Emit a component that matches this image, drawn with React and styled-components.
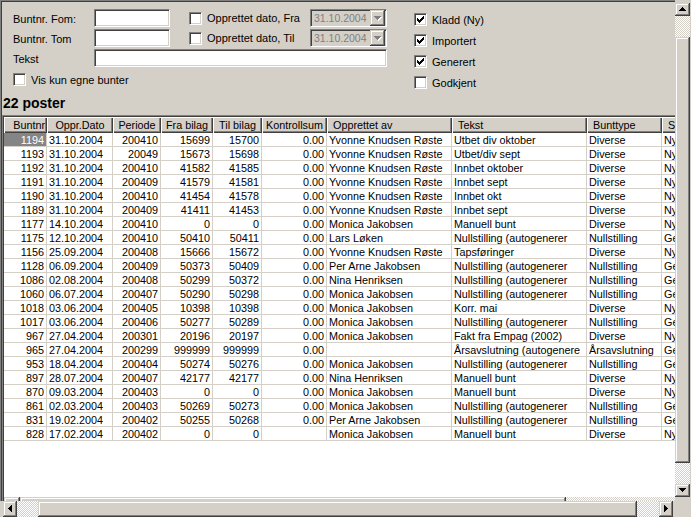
import React from 'react';
import styled, { createGlobalStyle } from 'styled-components';

const face = '#d4d0c8';
const shadow = '#808080';
const dark = '#404040';
const gridLine = '#d4d0c8';

const raised = `inset -1px -1px ${dark}, inset 1px 1px ${face}, inset -2px -2px ${shadow}, inset 2px 2px #ffffff`;
const checker = `repeating-conic-gradient(${face} 0 25%, #ffffff 0 50%) 0 0 / 2px 2px`;

const GlobalStyle = createGlobalStyle`
  html, body { margin: 0; padding: 0; background: ${face}; }
  body {
    font-family: 'Liberation Sans', Arial, sans-serif;
    font-size: 11px;
    color: #000;
  }
  * { box-sizing: border-box; }
`;

const Window = styled.div`
  width: 691px;
  height: 517px;
  overflow: hidden;
  display: grid;
  grid-template-columns: 675px 16px;
  grid-template-rows: 501px 16px;
  background: ${face};
`;

const Viewport = styled.div`
  overflow: hidden;
  border-top: 1px solid ${shadow};
  border-left: 1px solid ${shadow};
  box-shadow: inset 1px 1px ${dark};
  padding: 1px 0 0 1px;
`;

/* ---------- filter panel ---------- */

const FilterPanel = styled.div`
  display: flex;
  align-items: flex-start;
  padding: 7px 0 0 11px;
`;

const FormGrid = styled.div`
  display: grid;
  grid-template-columns: 81px 76px 19px 121px 77px;
  grid-template-rows: 18px 18px 18px 18px;
  row-gap: 2px;
  align-items: center;
`;

const Label = styled.div`
  padding-top: 2px;
  white-space: nowrap;
`;

const Sunken = styled.div`
  height: 18px;
  background: ${p => (p.$disabled ? face : '#ffffff')};
  border: 1px solid;
  border-color: ${shadow} #ffffff #ffffff ${shadow};
  box-shadow: inset 1px 1px ${dark}, inset -1px -1px ${face};
  grid-column: ${p => p.$span || 'auto'};
`;

const Combo = styled(Sunken)`
  display: flex;
  align-items: center;
  justify-content: space-between;
  padding: 0 1px 0 3px;
  color: ${shadow};
  font-size: 10.5px;
`;

const ComboButton = styled.div`
  width: 15px;
  height: 16px;
  flex: none;
  background: ${face};
  box-shadow: ${raised};
  display: flex;
  align-items: center;
  justify-content: center;
`;

const CheckItem = styled.label`
  display: flex;
  align-items: center;
  gap: 5px;
  white-space: nowrap;
  grid-column: ${p => p.$span || 'auto'};
  margin-top: ${p => p.$offset || 0}px;
  align-self: ${p => (p.$offset ? 'start' : 'auto')};
`;

const Box = styled.span`
  width: 13px;
  height: 13px;
  flex: none;
  background: #ffffff;
  border: 1px solid;
  border-color: ${shadow} #ffffff #ffffff ${shadow};
  box-shadow: inset 1px 1px ${dark}, inset -1px -1px ${face};
  display: flex;
  align-items: center;
  justify-content: center;
`;

const StatusChecks = styled.div`
  margin: 4px 0 0 27px;
  display: flex;
  flex-direction: column;
  align-items: flex-start;
  gap: 8px;
`;

const CountLabel = styled.div`
  margin: 6px 0 0 1px;
  font-size: 14px;
  font-weight: bold;
  line-height: 16px;
`;

/* ---------- data grid ---------- */

const GridBox = styled.div`
  margin-top: 4px;
  width: 760px;
  height: 398px;
  display: flex;
  flex-direction: column;
  border-top: 1px solid ${shadow};
  border-left: 1px solid ${shadow};
  box-shadow: inset 1px 1px ${dark};
  padding: 1px 0 0 1px;
`;

const GridBody = styled.div`
  flex: 1;
  overflow: hidden;
  background: #ffffff;
  font-size: 10.8px;
`;

const colTemplate = '43px 66px 48px 52px 49px 65px 125px 135px 75px 60px';

const Row = styled.div`
  display: grid;
  grid-template-columns: ${colTemplate};
  height: ${p => (p.$head ? 16 : 14)}px;
`;

const HeadCell = styled.div`
  background: ${face};
  box-shadow: inset 1px 1px #ffffff, inset -1px -1px ${dark}, inset -2px -2px ${shadow};
  line-height: 16px;
  padding: 0 ${p => (p.$align === 'left' ? '6px' : '2px')};
  text-align: ${p => p.$align};
  white-space: nowrap;
  overflow: hidden;
`;

const Cell = styled.div`
  border-right: 1px solid ${gridLine};
  border-bottom: 1px solid ${gridLine};
  padding: 1px 2px 0;
  line-height: 13px;
  text-align: ${p => (p.$right ? 'right' : 'left')};
  white-space: nowrap;
  overflow: hidden;
  background: ${p => (p.$selected ? '#858585' : '#ffffff')};
  color: ${p => (p.$selected ? '#ffffff' : '#000000')};
`;

/* ---------- scrollbars ---------- */

const HBar = styled.div`
  display: flex;
  height: 16px;
  margin-left: ${p => p.$inset || 0}px;
  margin-right: ${p => p.$end || 0}px;
  flex: none;
`;

const VBar = styled.div`
  display: flex;
  flex-direction: column;
  width: 15px;
  height: 494px;
  margin-top: 3px;
`;

const ArrowButton = styled.div`
  flex: 0 0 ${p => p.$size}px;
  background: ${face};
  box-shadow: ${raised};
  display: flex;
  align-items: center;
  justify-content: center;
`;

const Track = styled.div`
  flex: ${p => (p.$size ? `0 0 ${p.$size}px` : '1')};
  background: ${checker};
`;

const Thumb = styled.div`
  flex: 0 0 ${p => p.$size}px;
  background: ${face};
  box-shadow: ${raised};
`;

const Corner = styled.div`
  background: ${face};
`;

const arrows = {
  up: { w: 7, h: 4, d: 'M3 0h1v1h1v1h1v1h1v1H0V3h1V2h1V1h1z' },
  down: { w: 7, h: 4, d: 'M0 0h7v1H6v1H5v1H4v1H3V3H2V2H1V1H0z' },
  left: { w: 4, h: 7, d: 'M3 0h1v7H3V6H2V5H1V4H0V3h1V2h1V1h1z' },
  right: { w: 4, h: 7, d: 'M0 0h1v1h1v1h1v1h1v1H3v1H2v1H1v1H0z' },
};

function Arrow({ dir, color = '#000', disabled }) {
  const a = arrows[dir];
  return (
    <svg width={a.w + 1} height={a.h + 1} viewBox={`0 0 ${a.w + 1} ${a.h + 1}`} shapeRendering="crispEdges">
      {disabled && <path d={a.d} fill="#ffffff" transform="translate(1 1)" />}
      <path d={a.d} fill={disabled ? shadow : color} />
    </svg>
  );
}

function CheckMark() {
  return (
    <svg width="7" height="7" viewBox="0 0 7 7" shapeRendering="crispEdges">
      <path d="M6 0h1v3H6v1H5v1H4v1H3v1H2V6H1V5H0V2h1v1h1v1h1V3h1V2h1V1h1z" fill="#000" />
    </svg>
  );
}

function CheckBox({ label, checked, span, offset }) {
  return (
    <CheckItem $span={span} $offset={offset}>
      <Box>{checked && <CheckMark />}</Box>
      <span>{label}</span>
    </CheckItem>
  );
}

function DateCombo() {
  return (
    <Combo $disabled>
      <span>31.10.2004</span>
      <ComboButton>
        <Arrow dir="down" disabled />
      </ComboButton>
    </Combo>
  );
}

const columns = [
  { title: 'Buntnr', right: true, head: 'right' },
  { title: 'Oppr.Dato', head: 'center' },
  { title: 'Periode', right: true, head: 'center' },
  { title: 'Fra bilag', right: true, head: 'center' },
  { title: 'Til bilag', right: true, head: 'center' },
  { title: 'Kontrollsum', right: true, head: 'center' },
  { title: 'Opprettet av', head: 'left' },
  { title: 'Tekst', head: 'left' },
  { title: 'Bunttype', head: 'left' },
  { title: 'Status', head: 'left' },
];

const YKR = 'Yvonne Knudsen Røste';
const MJ = 'Monica Jakobsen';
const NULL = 'Nullstilling (autogenerer';

const rows = [
  ['1194', '31.10.2004', '200410', '15699', '15700', '0.00', YKR, 'Utbet div oktober', 'Diverse', 'Ny'],
  ['1193', '31.10.2004', '20049', '15673', '15698', '0.00', YKR, 'Utbet/div sept', 'Diverse', 'Ny'],
  ['1192', '31.10.2004', '200410', '41582', '41585', '0.00', YKR, 'Innbet oktober', 'Diverse', 'Ny'],
  ['1191', '31.10.2004', '200409', '41579', '41581', '0.00', YKR, 'Innbet sept', 'Diverse', 'Ny'],
  ['1190', '31.10.2004', '200410', '41454', '41578', '0.00', YKR, 'Innbet okt', 'Diverse', 'Ny'],
  ['1189', '31.10.2004', '200409', '41411', '41453', '0.00', YKR, 'Innbet sept', 'Diverse', 'Ny'],
  ['1177', '14.10.2004', '200410', '0', '0', '0.00', MJ, 'Manuell bunt', 'Diverse', 'Ny'],
  ['1175', '12.10.2004', '200410', '50410', '50411', '0.00', 'Lars Løken', NULL, 'Nullstilling', 'Generert'],
  ['1156', '25.09.2004', '200408', '15666', '15672', '0.00', YKR, 'Tapsføringer', 'Diverse', 'Ny'],
  ['1128', '06.09.2004', '200409', '50373', '50409', '0.00', 'Per Arne Jakobsen', NULL, 'Nullstilling', 'Generert'],
  ['1086', '02.08.2004', '200408', '50299', '50372', '0.00', 'Nina  Henriksen', NULL, 'Nullstilling', 'Generert'],
  ['1060', '06.07.2004', '200407', '50290', '50298', '0.00', MJ, NULL, 'Nullstilling', 'Generert'],
  ['1018', '03.06.2004', '200405', '10398', '10398', '0.00', MJ, 'Korr. mai', 'Diverse', 'Ny'],
  ['1017', '03.06.2004', '200406', '50277', '50289', '0.00', MJ, NULL, 'Nullstilling', 'Generert'],
  ['967', '27.04.2004', '200301', '20196', '20197', '0.00', MJ, 'Fakt fra Empag (2002)', 'Diverse', 'Ny'],
  ['965', '27.04.2004', '200299', '999999', '999999', '0.00', '', 'Årsavslutning (autogenere', 'Årsavslutning', 'Generert'],
  ['953', '18.04.2004', '200404', '50274', '50276', '0.00', MJ, NULL, 'Nullstilling', 'Generert'],
  ['897', '28.07.2004', '200407', '42177', '42177', '0.00', 'Nina  Henriksen', 'Manuell bunt', 'Diverse', 'Ny'],
  ['870', '09.03.2004', '200403', '0', '0', '0.00', MJ, 'Manuell bunt', 'Diverse', 'Ny'],
  ['861', '02.03.2004', '200403', '50269', '50273', '0.00', MJ, NULL, 'Nullstilling', 'Generert'],
  ['831', '19.02.2004', '200402', '50255', '50268', '0.00', 'Per Arne Jakobsen', NULL, 'Nullstilling', 'Generert'],
  ['828', '17.02.2004', '200402', '0', '0', '', MJ, 'Manuell bunt', 'Diverse', 'Ny'],
];

export default function App() {
  return (
    <>
      <GlobalStyle />
      <Window>
        <Viewport>
          <FilterPanel>
            <FormGrid>
              <Label>Buntnr. Fom:</Label>
              <Sunken />
              <span />
              <CheckBox label="Opprettet dato, Fra" />
              <DateCombo />

              <Label>Buntnr. Tom</Label>
              <Sunken />
              <span />
              <CheckBox label="Opprettet dato, Til" />
              <DateCombo />

              <Label>Tekst</Label>
              <Sunken $span="2 / 6" />

              <CheckBox label="Vis kun egne bunter" span="1 / 4" offset={4} />
            </FormGrid>
            <StatusChecks>
              <CheckBox label="Kladd (Ny)" checked />
              <CheckBox label="Importert" checked />
              <CheckBox label="Generert" checked />
              <CheckBox label="Godkjent" />
            </StatusChecks>
          </FilterPanel>

          <CountLabel>22 poster</CountLabel>

          <GridBox>
            <GridBody>
              <Row $head>
                {columns.map(c => (
                  <HeadCell key={c.title} $align={c.head}>{c.title}</HeadCell>
                ))}
              </Row>
              {rows.map((r, i) => (
                <Row key={r[0]}>
                  {r.map((v, j) => (
                    <Cell key={j} $right={columns[j].right} $selected={i === 0 && j === 0}>
                      {v}
                    </Cell>
                  ))}
                </Row>
              ))}
            </GridBody>
            <HBar>
              <ArrowButton $size={16}><Arrow dir="left" /></ArrowButton>
              <Thumb $size={546} />
              <Track />
            </HBar>
          </GridBox>
        </Viewport>

        <VBar>
          <ArrowButton $size={13}><Arrow dir="up" /></ArrowButton>
          <Track $size={21} />
          <Thumb $size={426} />
          <Track />
          <ArrowButton $size={13}><Arrow dir="down" /></ArrowButton>
        </VBar>

        <HBar $inset={3} $end={2}>
          <ArrowButton $size={14}><Arrow dir="left" /></ArrowButton>
          <Track $size={21} />
          <Thumb $size={599} />
          <Track />
          <ArrowButton $size={14}><Arrow dir="right" /></ArrowButton>
        </HBar>
        <Corner />
      </Window>
    </>
  );
}
